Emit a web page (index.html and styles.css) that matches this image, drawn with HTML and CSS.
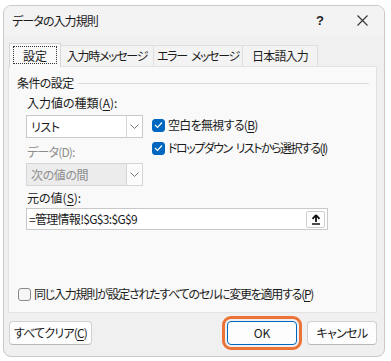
FILE: index.html
```html
<!DOCTYPE html>
<html lang="ja">
<head>
<meta charset="utf-8">
<link rel="stylesheet" href="styles.css">
</head>
<body>
<div class="window">
  <div class="titlebar">
    <span class="title">データの入力規則</span>
    <span class="help">?</span>
    <span class="close">
      <svg width="11" height="11" viewBox="0 0 11 11"><path d="M0.5 0.5 L10.5 10.5 M10.5 0.5 L0.5 10.5" stroke="#333" stroke-width="1.1" fill="none"/></svg>
    </span>
  </div>
  <div class="content">
    <div class="tabs">
      <div class="tab selected"><span class="focus">設定</span></div>
      <div class="tab t2">入力時メッセージ</div>
      <div class="tab t3">エラー<span class="sp"> </span>メッセージ</div>
      <div class="tab t4">日本語入力</div>
    </div>
    <div class="panel">
      <div class="group-title"><span class="gt">条件の設定</span><span class="line"></span></div>
      <div class="label l1">入力値の種類(<u>A</u>):</div>
      <div class="main">
        <div class="leftcol">
          <div class="combo"><span class="ctext">リスト</span><span class="cbtn"><svg width="9" height="5" viewBox="0 0 9 5"><path d="M0.5 0.5 L4.5 4.5 L8.5 0.5" stroke="#777" fill="none"/></svg></span></div>
          <div class="label disabled l2">データ(D):</div>
          <div class="combo dis"><span class="ctext">次の値の間</span><span class="cbtn"><svg width="9" height="5" viewBox="0 0 9 5"><path d="M0.5 0.5 L4.5 4.5 L8.5 0.5" stroke="#777" fill="none"/></svg></span></div>
        </div>
        <div class="rightcol">
          <div class="check c1"><span class="box on"><svg width="9" height="8" viewBox="0 0 9 8"><path d="M1 4 L3.5 6.5 L8 1.5" stroke="#fff" stroke-width="1.2" fill="none"/></svg></span><span class="ct">空白を無視する(<u>B</u>)</span></div>
          <div class="check c2"><span class="box on"><svg width="9" height="8" viewBox="0 0 9 8"><path d="M1 4 L3.5 6.5 L8 1.5" stroke="#fff" stroke-width="1.2" fill="none"/></svg></span><span class="ct">ドロップダウン<span class="sp"> </span>リストから選択する(<u>I</u>)</span></div>
        </div>
      </div>
      <div class="label l3">元の値(<u>S</u>):</div>
      <div class="source">
        <span class="stext">=管理情報!$G$3:$G$9</span>
        <span class="upbtn"><svg width="10" height="11" viewBox="0 0 10 11"><path d="M5 1 L1.5 4.8 M5 1 L8.5 4.8 M5 1.5 L5 8" stroke="#111" stroke-width="1.8" fill="none"/><path d="M1 10 L9 10" stroke="#111" stroke-width="1.5"/></svg></span>
      </div>
      <div class="spacer"></div>
      <div class="check bottom"><span class="box"></span><span class="ct">同じ入力規則が設定されたすべてのセルに変更を適用する(<u>P</u>)</span></div>
    </div>
    <div class="footer">
      <button class="btn clear">すべてクリア(<u>C</u>)</button>
      <span class="grow"></span>
      <button class="btn ok">OK</button>
      <button class="btn cancel">キャンセル</button>
    </div>
  </div>
</div>
</body>
</html>
```
FILE: styles.css
```css
* { box-sizing: border-box; }
html, body { margin: 0; padding: 0; background: #ffffff; }
body {
  font-family: "Noto Sans CJK JP", "Noto Sans", sans-serif;
  font-size: 12px;
  font-feature-settings: "palt";
  color: #1b1b1b;
}
u { text-underline-offset: 2px; }
.sp { display: inline-block; width: 4px; }
.window {
  margin: 5px 0 0 3px;
  width: 382px;
  height: 352px;
  border: 1px solid #c9c9c9;
  border-radius: 8px;
  background: #f0f0f0;
  overflow: hidden;
  display: flex;
  flex-direction: column;
}
.titlebar {
  height: 29px;
  background: #f3f3f3;
  display: flex;
  align-items: center;
  padding-left: 8px;
  flex: none;
}
.title { flex: 1; line-height: 16px; letter-spacing: -0.9px; }
.help { width: 8px; font-weight: bold; font-family: "Liberation Sans", sans-serif; font-size: 13px; color: #222; margin-right: 33px; }
.close { width: 11px; height: 11px; display: flex; margin-right: 16px; }
.content { padding: 0 7px 0 4px; flex: 1; display: flex; flex-direction: column; }
.tabs { display: flex; margin-top: 8px; height: 23px; padding-left: 1px; position: relative; z-index: 1; }
.tab {
  height: 21px;
  margin-top: 2px;
  border: 1px solid #dedede;
  border-bottom: none;
  background: #f3f3f3;
  display: flex;
  align-items: center;
  justify-content: center;
  line-height: 16px;
  white-space: nowrap;
  letter-spacing: -1.3px;
}
.tab.selected {
  height: 24px;
  margin-top: 0;
  width: 52px;
  background: #f9f9f9;
  border-color: #d6d6d6;
  letter-spacing: 0;
}
.focus { border: 1px dotted #333; padding: 0 9px; line-height: 15px; height: 18px; display: flex; align-items: center; margin-bottom: 1px; }
.t2 { width: 93px; border-left: none; }
.t3 { width: 89px; border-left: none; }
.t4 { width: 75px; border-left: none; letter-spacing: -0.8px; }
.panel {
  height: 247px;
  border: 1px solid #e2e2e2;
  background: #f9f9f9;
  display: flex;
  flex-direction: column;
}
.group-title { display: flex; align-items: center; margin: 8px 7px 0 8px; height: 16px; line-height: 16px; }
.gt { letter-spacing: -0.6px; }
.group-title .line { flex: 1; border-top: 1px solid #dcdcdc; margin-left: 4px; }
.label { height: 16px; line-height: 16px; margin-left: 18px; }
.l1 { margin-top: 4px; }
.main { display: flex; margin-top: 4px; margin-left: 17px; }
.leftcol { width: 117px; }
.combo {
  height: 23px;
  border: 1px solid #c9c9c9;
  background: #fff;
  display: flex;
  align-items: stretch;
}
.ctext { flex: 1; padding-left: 4px; line-height: 21px; letter-spacing: -0.4px; }
.cbtn { width: 16px; border-left: 1px solid #d6d6d6; display: flex; align-items: center; justify-content: center; background: #fff; }
.combo.dis { background: #ececec; border-color: #d6d6d6; color: #8c8c8c; }
.combo.dis .cbtn { background: #fbfbfb; }
.disabled { color: #8c8c8c; margin-left: 1px; letter-spacing: -0.8px; }
.l2 { margin-top: 6px; margin-bottom: 3px; }
.rightcol { margin-left: 9px; padding-top: 2px; }
.check { display: flex; align-items: center; height: 16px; line-height: 16px; white-space: nowrap; }
.c1 .ct { letter-spacing: -0.7px; }
.c2 { margin-top: 7px; }
.c2 .ct { letter-spacing: -1.5px; }
.box {
  width: 13px; height: 13px; border-radius: 3px; margin-right: 3px;
  border: 1px solid #8a8a8a; background: #f6f6f6;
  display: flex; align-items: center; justify-content: center; flex: none;
}
.box.on { background: #0067c0; border-color: #0067c0; }
.l3 { margin-top: 4px; }
.source {
  margin: 2px 0 0 17px;
  width: 302px;
  height: 22px;
  border: 1px solid #c9c9c9;
  background: #fff;
  display: flex;
  align-items: center;
  padding-left: 2px;
}
.stext { flex: 1; line-height: 16px; letter-spacing: -0.7px; }
.upbtn {
  width: 19px; height: 17px; margin-right: 2px;
  border: 1px solid #cfcfcf; border-radius: 2px; background: #fdfdfd;
  display: flex; align-items: center; justify-content: center;
}
.spacer { flex: 1; }
.check.bottom { margin: 0 0 10px 9px; }
.bottom .ct { letter-spacing: -1.25px; }
.footer { display: flex; margin-top: 8px; padding-left: 1px; padding-right: 0; }
.grow { flex: 1; }
.btn {
  font: inherit;
  color: #1b1b1b;
  height: 24px;
  border: 1px solid #d0d0d0;
  border-bottom-color: #b8b8b8;
  border-radius: 4px;
  background: #fdfdfd;
  padding: 0;
  line-height: 16px;
  white-space: nowrap;
}
.clear { width: 83px; letter-spacing: -0.8px; }
.ok { width: 70px; border: 1px solid #0067c0; outline: 3px solid #ec7336; outline-offset: 2px; }
.cancel { width: 70px; margin-left: 10px; letter-spacing: -0.6px; }
```
